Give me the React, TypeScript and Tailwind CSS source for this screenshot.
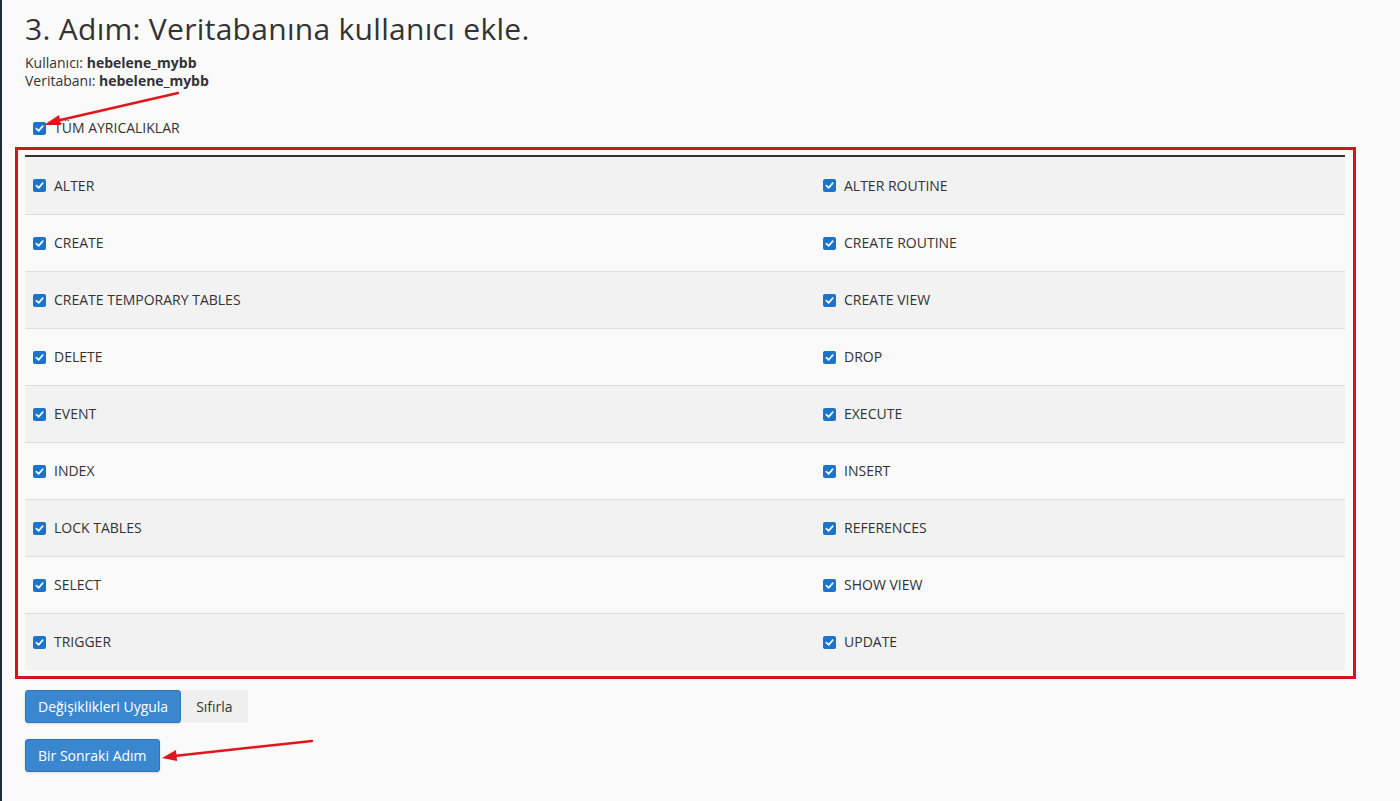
const left = [
  "ALTER",
  "CREATE",
  "CREATE TEMPORARY TABLES",
  "DELETE",
  "EVENT",
  "INDEX",
  "LOCK TABLES",
  "SELECT",
  "TRIGGER",
];
const right = [
  "ALTER ROUTINE",
  "CREATE ROUTINE",
  "CREATE VIEW",
  "DROP",
  "EXECUTE",
  "INSERT",
  "REFERENCES",
  "SHOW VIEW",
  "UPDATE",
];

function Check() {
  return (
    <span className="inline-flex w-[13px] h-[13px] rounded-[2px] bg-[#1b74cc] items-center justify-center shrink-0">
      <svg width="9" height="9" viewBox="0 0 10 10" fill="none">
        <path d="M1.5 5.2 L4 7.6 L8.6 2.4" stroke="white" strokeWidth="1.8" strokeLinecap="round" strokeLinejoin="round" />
      </svg>
    </span>
  );
}

function Priv({ label }: { label: string }) {
  return (
    <label className="flex items-center gap-2 pl-2">
      <Check />
      <span>{label}</span>
    </label>
  );
}

export default function App() {
  return (
    <div
      className="relative min-h-screen bg-[#fafafa] border-l-2 border-[#1f2b3a] pl-[23px] pt-3 text-[#333] text-[14px] leading-[18px]"
      style={{ fontFamily: '"Open Sans", "Noto Sans", sans-serif' }}
    >
      <h1 className="text-[30px] leading-[34px] tracking-[0.3px] font-normal text-[#333]">3. Adım: Veritabanına kullanıcı ekle.</h1>

      <div className="mt-2">
        Kullanıcı: <b className="font-bold">hebelene_mybb</b>
      </div>
      <div>
        Veritabanı: <b className="font-bold">hebelene_mybb</b>
      </div>

      {/* Tüm ayrıcalıklar */}
      <label className="flex items-center gap-2 pl-2 mt-[29px] h-[18px]">
        <Check />
        <span>TÜM AYRICALIKLAR</span>
      </label>

      {/* privileges table with red highlight */}
      <div className="mt-[10px] -ml-[10px] w-[1341px] border-[3px] border-[#d4141a] pl-[7px] pr-[8px] pt-[5px] pb-[6px]">
        <div className="border-t-2 border-[#333]">
          {left.map((l, i) => (
            <div
              key={l}
              className={`grid grid-cols-[790px_1fr] h-[57px] items-center ${i > 0 ? "border-t border-[#dddddd]" : ""} ${i % 2 === 0 ? "bg-[#f2f2f2]" : "bg-[#f9f9f9]"}`}
            >
              <Priv label={l} />
              <Priv label={right[i]} />
            </div>
          ))}
        </div>
      </div>

      {/* buttons */}
      <div className="flex mt-[11px]">
        <button className="h-[33px] px-3 rounded-[3px] bg-[#3a87d0] border border-[#2f74b8] text-white shadow-sm">
          Değişiklikleri Uygula
        </button>
        <button className="h-[33px] px-[15px] bg-[#efefef] text-[#333]">Sıfırla</button>
      </div>
      <button className="mt-4 h-[33px] px-3 rounded-[3px] bg-[#3a87d0] border border-[#2f74b8] text-white shadow-sm">
        Bir Sonraki Adım
      </button>

      {/* annotation arrows */}
      <svg className="absolute inset-0 pointer-events-none" width="1400" height="801">
        <line x1="176" y1="93" x2="54" y2="121" stroke="#e0161c" strokeWidth="2.5" strokeLinecap="round" />
        <polygon points="42,125 57,115 59,125" fill="#e0161c" />
        <line x1="310" y1="741" x2="172" y2="756" stroke="#e0161c" strokeWidth="2.5" strokeLinecap="round" />
        <polygon points="160,758 174,750 175,761" fill="#e0161c" />
      </svg>
    </div>
  );
}
